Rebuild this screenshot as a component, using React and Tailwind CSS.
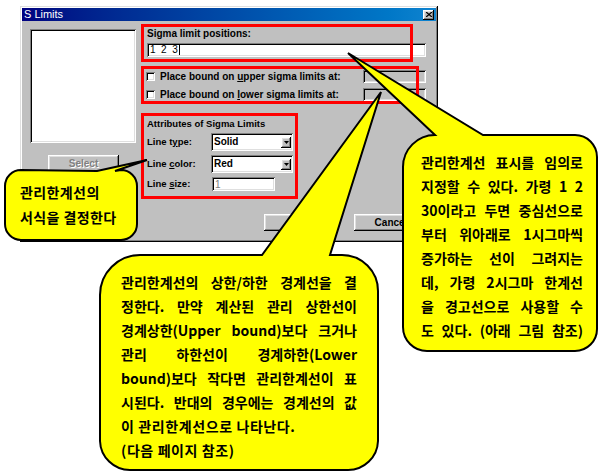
const raised =
  "shadow-[inset_-1px_-1px_0_#000,inset_1px_1px_0_#fff,inset_-2px_-2px_0_#808080,inset_2px_2px_0_#dfdfdf]";
const sunken =
  "shadow-[inset_1px_1px_0_#808080,inset_-1px_-1px_0_#fff,inset_2px_2px_0_#000,inset_-2px_-2px_0_#dfdfdf]";

const Checkbox = () => (
  <div className={`w-[9px] h-[9px] bg-white shrink-0 ${sunken}`} />
);

const Combo = ({ value }) => (
  <div className={`w-[82px] h-[18px] bg-white flex items-center pl-[3px] pr-[2px] ${sunken}`}>
    <span className="flex-1 text-[10px] font-bold leading-none">{value}</span>
    <div className={`w-[10px] h-[11px] bg-[#c0c0c0] flex items-center justify-center ${raised}`}>
      <svg width="5" height="3" viewBox="0 0 5 3">
        <path d="M0 0h5L2.5 3z" fill="#000" />
      </svg>
    </div>
  </div>
);

const Button = ({ children }) => (
  <div
    className={`w-[74px] h-[17px] bg-[#c0c0c0] flex items-center justify-center text-[10px] font-bold text-black ${raised}`}
  >
    {children}
  </div>
);

const Dialog = () => (
  <div className="w-[418px] h-[236px] bg-[#c0c0c0] p-[2px] flex flex-col shadow-[inset_-1px_-1px_0_#000,inset_1px_1px_0_#dfdfdf,inset_-2px_-2px_0_#808080,inset_2px_2px_0_#fff]">
    {/* title bar */}
    <div className="h-[13px] flex items-center justify-between bg-linear-to-r from-[#000080] to-[#1084d0] pl-[2px] pr-[2px]">
      <span className="text-white text-[11px] leading-none">S Limits</span>
      <div className={`w-[11px] h-[10px] bg-[#c0c0c0] flex items-center justify-center ${raised}`}>
        <svg width="6" height="5" viewBox="0 0 6 5">
          <path d="M0 0L6 5M6 0L0 5" stroke="#000" strokeWidth="1.3" />
        </svg>
      </div>
    </div>

    <div className="flex-1 flex flex-col px-[8px] pt-[7px]">
      <div className="flex items-start">
        {/* left column */}
        <div className="w-[106px] mt-[1px] flex flex-col">
          <div className={`h-[114px] bg-white ${sunken}`} />
          <div
            className={`mt-[12px] ml-[18px] w-[71px] h-[17px] bg-[#c0c0c0] flex items-center justify-center text-[10px] font-bold text-[#808080] [text-shadow:1px_1px_0_#fff] ${raised}`}
          >
            Select
          </div>
        </div>

        {/* right column */}
        <div className="ml-[11px] w-[279px] flex flex-col">
          <div className="h-[12px] leading-[12px] text-[10px] font-bold">Sigma limit positions:</div>
          <div className={`mt-[3px] h-[14px] bg-white flex items-center pl-[3px] ${sunken}`}>
            <span className="text-[10px] leading-none whitespace-pre">1  2  3</span>
            <span className="inline-block w-[1px] h-[10px] bg-black ml-[1px]" />
          </div>

          <div className="mt-[13px] h-[13px] flex items-center -ml-[1px]">
            <Checkbox />
            <span className="ml-[5px] flex-1 text-[10px] font-bold leading-none">
              Place bound on <span className="underline">u</span>pper sigma limits at:
            </span>
            <div className={`w-[63px] h-[13px] bg-[#c0c0c0] ${sunken}`} />
          </div>
          <div className="mt-[5px] h-[13px] flex items-center -ml-[1px]">
            <Checkbox />
            <span className="ml-[5px] flex-1 text-[10px] font-bold leading-none">
              Place bound on <span className="underline">l</span>ower sigma limits at:
            </span>
            <div className={`w-[63px] h-[13px] bg-[#c0c0c0] ${sunken}`} />
          </div>

          <div className="mt-[17px] h-[12px] leading-[12px] text-[9.5px] font-bold">Attributes of Sigma Limits</div>
          <div className="mt-[3px] h-[18px] flex items-center">
            <span className="w-[64px] text-[9.5px] font-bold">
              Line t<span className="underline">y</span>pe:
            </span>
            <Combo value="Solid" />
          </div>
          <div className="mt-[4px] h-[18px] flex items-center">
            <span className="w-[64px] text-[9.5px] font-bold">
              Line <span className="underline">c</span>olor:
            </span>
            <Combo value="Red" />
          </div>
          <div className="mt-[4px] h-[14px] flex items-center">
            <span className="w-[65px] text-[9.5px] font-bold">
              Line <span className="underline">s</span>ize:
            </span>
            <div className={`w-[63px] h-[14px] bg-white flex items-center pl-[3px] text-[10px] text-[#808080] ${sunken}`}>
              1
            </div>
          </div>
        </div>
      </div>

      <div className="mt-[23px] flex justify-end gap-[16px]">
        <Button>OK</Button>
        <Button>Cancel</Button>
      </div>
    </div>
  </div>
);

const Line = ({ children, justify = true }) => (
  <div
    className={`whitespace-nowrap ${
      justify ? "text-justify [text-align-last:justify]" : "tracking-[0.6px]"
    }`}
  >
    {children}
  </div>
);

export default function App() {
  return (
    <div className="relative w-[601px] h-[474px] bg-white overflow-hidden pl-[20px] pt-[6px] font-['Liberation_Sans',Arial,sans-serif] text-black">
      <Dialog />

      {/* red annotation frames */}
      <div className="absolute left-[141px] top-[24px] w-[272px] h-[38px] border-[3px] border-[#ff0000]" />
      <div className="absolute left-[141px] top-[66px] w-[278px] h-[38px] border-[3px] border-[#ff0000]" />
      <div className="absolute left-[141px] top-[113px] w-[157px] h-[86px] border-[3px] border-[#ff0000]" />

      {/* callout balloons */}
      <svg className="absolute left-0 top-0 pointer-events-none" width="601" height="474" viewBox="0 0 601 474">
        <path
          d="M21 170 L97 171 L147 160 L115 171 L121 170 A16 16 0 0 1 137 186 L137 224 A16 16 0 0 1 121 240 L21 240 A16 16 0 0 1 5 224 L5 186 A16 16 0 0 1 21 170 Z"
          fill="#ffff00"
          stroke="#000"
          strokeWidth="2"
        />
        <path
          d="M140 255 L262 255 L381 92 L330 255 L342 255 A36 36 0 0 1 378 291 L378 441 A30 30 0 0 1 348 470 L130 470 A30 30 0 0 1 100 441 L100 295 A40 40 0 0 1 140 255 Z"
          fill="#ffff00"
          stroke="#000"
          strokeWidth="2"
        />
        <path
          d="M435 135 L348 53 L483 135 L575 135 A22 22 0 0 1 597 157 L597 329 A22 22 0 0 1 575 351 L427 351 A24 24 0 0 1 403 327 L403 167 A32 32 0 0 1 435 135 Z"
          fill="#ffff00"
          stroke="#000"
          strokeWidth="2"
        />
      </svg>

      <div className="absolute left-[20px] top-[180px] text-[14px] leading-[25px] tracking-[0.4px] font-bold font-['Noto_Sans_CJK_KR',sans-serif]">
        <div>관리한계선의</div>
        <div>서식을 결정한다</div>
      </div>

      <div className="absolute left-[121px] top-[270px] w-[236px] text-[14px] leading-[24px] font-bold font-['Noto_Sans_CJK_KR',sans-serif]">
        <Line>관리한계선의 상한/하한 경계선을 결</Line>
        <Line>정한다. 만약 계산된 관리 상한선이</Line>
        <Line>경계상한(Upper bound)보다 크거나</Line>
        <Line>관리 하한선이 경계하한(Lower</Line>
        <Line>bound)보다 작다면 관리한계선이 표</Line>
        <Line>시된다. 반대의 경우에는 경계선의 값</Line>
        <Line justify={false}>이 관리한계선으로 나타난다.</Line>
        <Line justify={false}>(다음 페이지 참조)</Line>
      </div>

      <div className="absolute left-[421px] top-[150px] w-[162px] text-[14px] leading-[24px] font-bold font-['Noto_Sans_CJK_KR',sans-serif]">
        <Line>관리한계선 표시를 임의로</Line>
        <Line>지정할 수 있다. 가령 1 2</Line>
        <Line>30이라고 두면 중심선으로</Line>
        <Line>부터 위아래로 1시그마씩</Line>
        <Line>증가하는 선이 그려지는</Line>
        <Line>데, 가령 2시그마 한계선</Line>
        <Line>을 경고선으로 사용할 수</Line>
        <Line>도 있다. (아래 그림 참조)</Line>
      </div>
    </div>
  );
}
